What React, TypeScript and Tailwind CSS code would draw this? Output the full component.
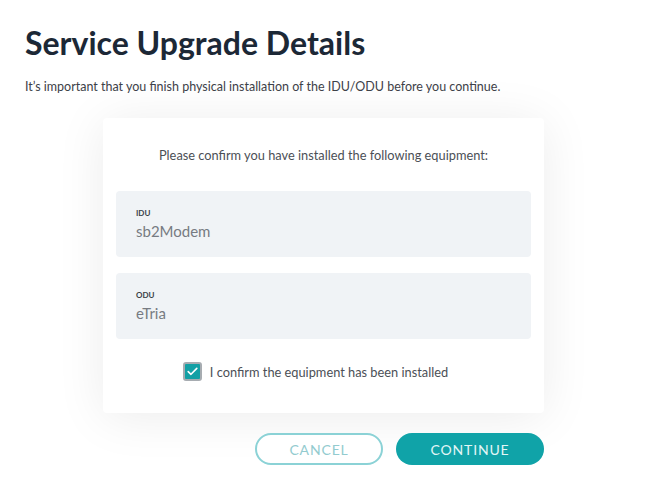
export default function App() {
  return (
    <div className="min-h-[500px] w-[646px] bg-white font-['Lato',sans-serif]">
      <div className="px-[25px] pt-[23px]">
        <h1 className="text-[32px] font-bold leading-[40px] text-[#1c2836]">Service Upgrade Details</h1>
        <p className="mt-[16px] text-[12.5px] leading-[16px] text-[#3d4148]">
          It’s important that you finish physical installation of the IDU/ODU before you continue.
        </p>
      </div>

      <div className="ml-[103px] mt-[23px] w-[441px]">
        {/* Card */}
        <div className="rounded-[4px] bg-white px-[13px] pb-[32px] pt-[29px] shadow-[0_4px_50px_rgba(0,0,0,0.08)]">
          <p className="text-center text-[12.8px] leading-[16px] text-[#4b4f56]">
            Please confirm you have installed the following equipment:
          </p>

          <div className="mt-[28px] flex flex-col gap-[16px]">
            {[
              { label: "IDU", value: "sb2Modem" },
              { label: "ODU", value: "eTria" },
            ].map((f) => (
              <div key={f.label} className="h-[66px] rounded-[4px] bg-[#f0f3f6] px-[20px] pt-[17px]">
                <div className="text-[8px] font-bold leading-[10px] text-[#3a3f47]">{f.label}</div>
                <div className="mt-[3px] text-[15px] leading-[20px] text-[#777b82]">{f.value}</div>
              </div>
            ))}
          </div>

          <label className="mt-[23px] flex items-center justify-center gap-[8px] pr-[16px]">
            <span className="flex h-[19px] w-[19px] items-center justify-center rounded-[3px] border-2 border-[#a7acb1] bg-[#13a0a5]">
              <svg width="11" height="9" viewBox="0 0 11 9" fill="none">
                <path d="M1.2 4.6 L4 7.3 L9.8 1.4" stroke="white" strokeWidth="1.6" strokeLinecap="round" strokeLinejoin="round" />
              </svg>
            </span>
            <span className="text-[12.8px] leading-[16px] text-[#4b4f56]">I confirm the equipment has been installed</span>
          </label>
        </div>

        {/* Buttons */}
        <div className="mt-[20px] flex justify-end gap-[13px]">
          <button className="h-[32px] w-[128px] rounded-full border-2 border-[#8bd2d6] bg-white text-[14px] tracking-[0.06em] text-[#93cbcf]">
            CANCEL
          </button>
          <button className="h-[32px] w-[148px] rounded-full bg-[#10a3a8] text-[14px] tracking-[0.06em] text-[#e3f6f6]">
            CONTINUE
          </button>
        </div>
      </div>
    </div>
  );
}
